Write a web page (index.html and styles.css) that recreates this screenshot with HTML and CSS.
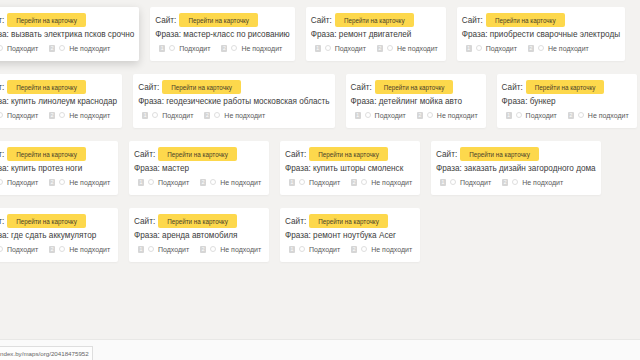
FILE: index.html
```html
<!DOCTYPE html>
<html lang="ru">

<head>
  <meta charset="UTF-8">
  <meta name="viewport" content="width=device-width, initial-scale=1.0">
  <title>Оценка фраз</title>
  <link rel="stylesheet" href="styles.css">
</head>

<body>
  <main class="board">
    <div class="row">
      <div class="card card-active">
        <div class="site">Сайт: <a class="go" href="#">Перейти на карточку</a></div>
        <div class="phrase">Фраза: вызвать электрика псков срочно</div>
        <div class="marks">
          <span class="key">1</span><span class="radio"></span><span class="opt">Подходит</span>
          <span class="key">2</span><span class="radio"></span><span class="opt">Не подходит</span>
        </div>
      </div>
      <div class="card">
        <div class="site">Сайт: <a class="go" href="#">Перейти на карточку</a></div>
        <div class="phrase">Фраза: мастер-класс по рисованию</div>
        <div class="marks">
          <span class="key">1</span><span class="radio"></span><span class="opt">Подходит</span>
          <span class="key">2</span><span class="radio"></span><span class="opt">Не подходит</span>
        </div>
      </div>
      <div class="card">
        <div class="site">Сайт: <a class="go" href="#">Перейти на карточку</a></div>
        <div class="phrase">Фраза: ремонт двигателей</div>
        <div class="marks">
          <span class="key">1</span><span class="radio"></span><span class="opt">Подходит</span>
          <span class="key">2</span><span class="radio"></span><span class="opt">Не подходит</span>
        </div>
      </div>
      <div class="card">
        <div class="site">Сайт: <a class="go" href="#">Перейти на карточку</a></div>
        <div class="phrase">Фраза: приобрести сварочные электроды</div>
        <div class="marks">
          <span class="key">1</span><span class="radio"></span><span class="opt">Подходит</span>
          <span class="key">2</span><span class="radio"></span><span class="opt">Не подходит</span>
        </div>
      </div>
    </div>

    <div class="row">
      <div class="card">
        <div class="site">Сайт: <a class="go" href="#">Перейти на карточку</a></div>
        <div class="phrase">Фраза: купить линолеум краснодар</div>
        <div class="marks">
          <span class="key">1</span><span class="radio"></span><span class="opt">Подходит</span>
          <span class="key">2</span><span class="radio"></span><span class="opt">Не подходит</span>
        </div>
      </div>
      <div class="card">
        <div class="site">Сайт: <a class="go" href="#">Перейти на карточку</a></div>
        <div class="phrase">Фраза: геодезические работы московская область</div>
        <div class="marks">
          <span class="key">1</span><span class="radio"></span><span class="opt">Подходит</span>
          <span class="key">2</span><span class="radio"></span><span class="opt">Не подходит</span>
        </div>
      </div>
      <div class="card">
        <div class="site">Сайт: <a class="go" href="#">Перейти на карточку</a></div>
        <div class="phrase">Фраза: детейлинг мойка авто</div>
        <div class="marks">
          <span class="key">1</span><span class="radio"></span><span class="opt">Подходит</span>
          <span class="key">2</span><span class="radio"></span><span class="opt">Не подходит</span>
        </div>
      </div>
      <div class="card">
        <div class="site">Сайт: <a class="go" href="#">Перейти на карточку</a></div>
        <div class="phrase">Фраза: бункер</div>
        <div class="marks">
          <span class="key">1</span><span class="radio"></span><span class="opt">Подходит</span>
          <span class="key">2</span><span class="radio"></span><span class="opt">Не подходит</span>
        </div>
      </div>
    </div>

    <div class="row">
      <div class="card">
        <div class="site">Сайт: <a class="go" href="#">Перейти на карточку</a></div>
        <div class="phrase">Фраза: купить протез ноги</div>
        <div class="marks">
          <span class="key">1</span><span class="radio"></span><span class="opt">Подходит</span>
          <span class="key">2</span><span class="radio"></span><span class="opt">Не подходит</span>
        </div>
      </div>
      <div class="card">
        <div class="site">Сайт: <a class="go" href="#">Перейти на карточку</a></div>
        <div class="phrase">Фраза: мастер</div>
        <div class="marks">
          <span class="key">1</span><span class="radio"></span><span class="opt">Подходит</span>
          <span class="key">2</span><span class="radio"></span><span class="opt">Не подходит</span>
        </div>
      </div>
      <div class="card">
        <div class="site">Сайт: <a class="go" href="#">Перейти на карточку</a></div>
        <div class="phrase">Фраза: купить шторы смоленск</div>
        <div class="marks">
          <span class="key">1</span><span class="radio"></span><span class="opt">Подходит</span>
          <span class="key">2</span><span class="radio"></span><span class="opt">Не подходит</span>
        </div>
      </div>
      <div class="card">
        <div class="site">Сайт: <a class="go" href="#">Перейти на карточку</a></div>
        <div class="phrase">Фраза: заказать дизайн загородного дома</div>
        <div class="marks">
          <span class="key">1</span><span class="radio"></span><span class="opt">Подходит</span>
          <span class="key">2</span><span class="radio"></span><span class="opt">Не подходит</span>
        </div>
      </div>
    </div>

    <div class="row">
      <div class="card">
        <div class="site">Сайт: <a class="go" href="#">Перейти на карточку</a></div>
        <div class="phrase">Фраза: где сдать аккумулятор</div>
        <div class="marks">
          <span class="key">1</span><span class="radio"></span><span class="opt">Подходит</span>
          <span class="key">2</span><span class="radio"></span><span class="opt">Не подходит</span>
        </div>
      </div>
      <div class="card">
        <div class="site">Сайт: <a class="go" href="#">Перейти на карточку</a></div>
        <div class="phrase">Фраза: аренда автомобиля</div>
        <div class="marks">
          <span class="key">1</span><span class="radio"></span><span class="opt">Подходит</span>
          <span class="key">2</span><span class="radio"></span><span class="opt">Не подходит</span>
        </div>
      </div>
      <div class="card">
        <div class="site">Сайт: <a class="go" href="#">Перейти на карточку</a></div>
        <div class="phrase">Фраза: ремонт ноутбука Acer</div>
        <div class="marks">
          <span class="key">1</span><span class="radio"></span><span class="opt">Подходит</span>
          <span class="key">2</span><span class="radio"></span><span class="opt">Не подходит</span>
        </div>
      </div>
    </div>
  </main>

  <!-- scrollbar strip + link status -->
  <div class="bottom-bar"></div>
  <div class="status">ndex.by/maps/org/20418475952</div>
</body>

</html>
```

FILE: styles.css
```css
html,
body {
  margin: 0;
  padding: 0;
  height: 100%;
  overflow: hidden;
}

body {
  background: rgb(243, 242, 240);
  font-family: "Liberation Sans", Arial, sans-serif;
  color: #3c3c3c;
}

.board {
  display: flex;
  flex-direction: column;
  gap: 13px;
  padding-top: 7px;
  margin-left: -22px;
  width: 700px;
}

.row {
  display: flex;
  gap: 11px;
  align-items: flex-start;
}

.card {
  box-sizing: border-box;
  min-width: 140px;
  height: 54px;
  padding: 6px 5px 0 5px;
  background: #fff;
  border-radius: 2px;
  box-shadow: 0 1px 2px rgba(0, 0, 0, 0.04);
  white-space: nowrap;
}

.card-active {
  box-shadow: 0 3px 9px rgba(0, 0, 0, 0.16);
}

.site {
  height: 14px;
  display: flex;
  align-items: center;
  gap: 3px;
  font-size: 8.2px;
}

.go {
  display: inline-flex;
  align-items: center;
  height: 14px;
  padding: 0 9px;
  background: #fdd84c;
  border-radius: 2px;
  color: #4a3f2a;
  font-size: 6.3px;
  text-decoration: none;
}

.phrase {
  margin-top: 2px;
  height: 12px;
  line-height: 12px;
  font-size: 8.2px;
}

.marks {
  margin-top: 2px;
  padding-left: 4px;
  height: 10px;
  display: flex;
  align-items: center;
  font-size: 7px;
  color: #5a5a5a;
}

.key {
  width: 6px;
  height: 7px;
  background: #d6d6d6;
  border-radius: 1px;
  color: #fff;
  font-size: 5px;
  line-height: 7px;
  text-align: center;
}

.radio {
  box-sizing: border-box;
  width: 6px;
  height: 6px;
  margin-left: 4px;
  border: 1px solid #dedede;
  border-radius: 50%;
  background: #fff;
}

.opt {
  margin-left: 4px;
  margin-right: 11px;
}

.opt:last-child {
  margin-right: 0;
}

.bottom-bar {
  position: fixed;
  left: 0;
  right: 0;
  bottom: 0;
  height: 20px;
  background: #fafafa;
  border-top: 1px solid #e8e8e6;
}

.status {
  position: fixed;
  left: 0;
  bottom: 0;
  height: 13px;
  padding: 0 3px 0 0;
  background: #fdfdfd;
  border-top: 1px solid #dedede;
  border-right: 1px solid #dedede;
  font-size: 6.2px;
  line-height: 13px;
  color: #666;
}
```
